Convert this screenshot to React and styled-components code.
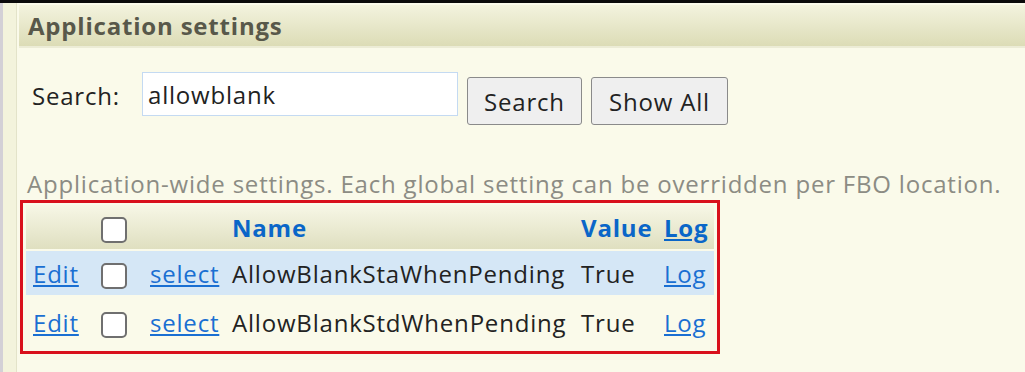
import React from "react";
import styled, { createGlobalStyle } from "styled-components";

const Global = createGlobalStyle`
  html, body { margin: 0; padding: 0; background: #fafaea; }
  body {
    font-family: "Open Sans", "Noto Sans", sans-serif;
    font-size: 24px;
    letter-spacing: 0.8px;
    color: #222;
  }
`;

const TopBar = styled.div`
  height: 3px;
  background: #0a0a0a;
`;

const Page = styled.div`
  display: flex;
  min-height: 369px;
`;

const Gutter = styled.div`
  width: 13px;
  flex: none;
  background: #f3f3dc;
  border-left: 3px solid #d3d0d6;
  border-right: 1px solid #e3e3c9;
`;

const Main = styled.div`
  flex: 1;
  padding: 2px 0 0 2px;
  background: #fafaea;
`;

const Header = styled.div`
  height: 41px;
  display: flex;
  align-items: center;
  padding-left: 9px;
  background: linear-gradient(#f3f3de, #dcdcb6);
  border-bottom: 2px solid #ececd6;
  font-weight: 700;
  color: #58584a;
`;

const SearchRow = styled.div`
  display: flex;
  align-items: flex-start;
  margin-top: 24px;
  padding-left: 13px;
`;

const Label = styled.span`
  margin-top: 7px;
  width: 110px;
  color: #222;
`;

const Input = styled.input`
  box-sizing: border-box;
  width: 316px;
  height: 44px;
  border: 1px solid #c4daf2;
  background: #fff;
  font: inherit;
  letter-spacing: inherit;
  color: #222;
  padding: 0 5px;
  outline: none;
`;

const Button = styled.button`
  box-sizing: border-box;
  margin-top: 5px;
  margin-left: 9px;
  height: 48px;
  width: ${(p) => p.$w}px;
  padding: 0;
  border: 1px solid #8a8a8a;
  border-radius: 3px;
  background: #efefef;
  font: inherit;
  letter-spacing: inherit;
  color: #222;
`;

const Description = styled.p`
  margin: 44px 0 0 8px;
  color: #8c8c84;
  line-height: 30px;
  white-space: nowrap;
`;

const Grid = styled.table`
  margin: 1px 0 0 1px;
  border: 3px solid #d8101c;
  border-spacing: 0 2px;
  padding: 0 3px 2px 3px;
  table-layout: fixed;
  border-collapse: separate;
`;

const HeadRow = styled.tr`
  height: 44px;
  background: linear-gradient(#f7f7e6, #dfdfc0);
`;

const Row = styled.tr`
  height: ${(p) => p.$h}px;
  background: ${(p) => (p.$alt ? "#d5e7f6" : "transparent")};
`;

const Cell = styled.td`
  width: ${(p) => p.$w}px;
  padding: 0 0 0 7px;
  white-space: nowrap;
  vertical-align: middle;
`;

const HeadCell = styled.th`
  width: ${(p) => p.$w}px;
  padding: 0 0 0 7px;
  text-align: left;
  font-weight: 700;
  color: #0a66c8;
  white-space: nowrap;
`;

const Link = styled.a`
  color: #1a6fd2;
  text-decoration: underline;
  cursor: pointer;
`;

const HeadLink = styled(Link)`
  color: #0a66c8;
`;

const Box = styled.span`
  display: inline-block;
  box-sizing: border-box;
  width: 26px;
  height: 26px;
  border: 2px solid #6f6f6f;
  border-radius: 5px;
  background: #fff;
  vertical-align: middle;
`;

const cols = [61, 42, 75, 342, 76, 50];

const rows = [
  { name: "AllowBlankStaWhenPending", value: "True", alt: true, h: 44 },
  { name: "AllowBlankStdWhenPending", value: "True", alt: false, h: 50 },
];

export default function App() {
  return (
    <>
      <Global />
      <TopBar />
      <Page>
        <Gutter />
        <Main>
          <Header>Application settings</Header>
          <SearchRow>
            <Label>Search:</Label>
            <Input defaultValue="allowblank" />
            <Button $w={115}>Search</Button>
            <Button $w={137}>Show All</Button>
          </SearchRow>
          <Description>
            Application-wide settings. Each global setting can be overridden per FBO location.
          </Description>
          <Grid>
            <tbody>
              <HeadRow>
                <HeadCell $w={cols[0]} />
                <HeadCell $w={cols[1]}><Box /></HeadCell>
                <HeadCell $w={cols[2]} />
                <HeadCell $w={cols[3]}>Name</HeadCell>
                <HeadCell $w={cols[4]}>Value</HeadCell>
                <HeadCell $w={cols[5]}><HeadLink>Log</HeadLink></HeadCell>
              </HeadRow>
              {rows.map((r) => (
                <Row key={r.name} $alt={r.alt} $h={r.h}>
                  <Cell $w={cols[0]}><Link>Edit</Link></Cell>
                  <Cell $w={cols[1]}><Box /></Cell>
                  <Cell $w={cols[2]}><Link>select</Link></Cell>
                  <Cell $w={cols[3]}>{r.name}</Cell>
                  <Cell $w={cols[4]}>{r.value}</Cell>
                  <Cell $w={cols[5]}><Link>Log</Link></Cell>
                </Row>
              ))}
            </tbody>
          </Grid>
        </Main>
      </Page>
    </>
  );
}
